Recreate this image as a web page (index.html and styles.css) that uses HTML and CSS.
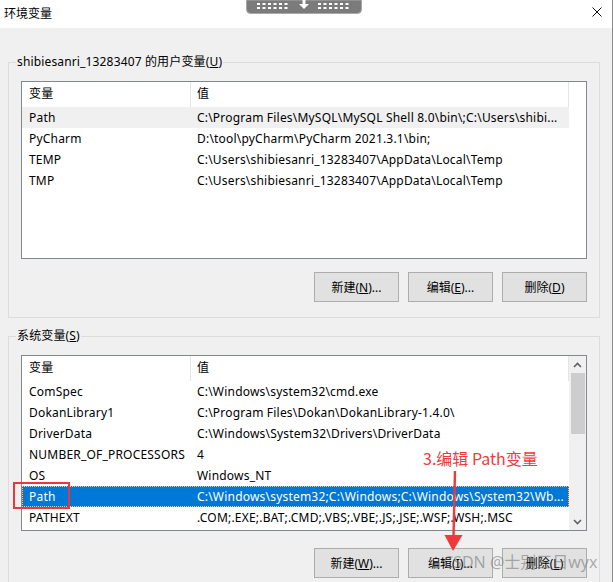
FILE: index.html
```html
<!DOCTYPE html>
<html lang="zh-CN">
<head>
<meta charset="utf-8">
<title>环境变量</title>
<link rel="stylesheet" href="styles.css">
</head>
<body>
<div class="window">
  <div class="titlebar">
    <span class="title">环境变量</span>
    <svg class="close" viewBox="0 0 10 10" width="10" height="10"><path d="M0.5 0.5L9.5 9.5M9.5 0.5L0.5 9.5" stroke="#111" stroke-width="1"/></svg>
  </div>
  <svg class="handle" viewBox="0 0 116 14" width="116" height="14">
    <path d="M0.5 0 V9.5 Q0.5 13.5 4.5 13.5 H111.5 Q115.5 13.5 115.5 9.5 V0 Z" fill="#7b7b7b" stroke="#a9a9a9"/>
    <g fill="#fff">
      <rect x="11" y="3" width="3" height="2"/><rect x="16.5" y="3" width="3" height="2"/><rect x="22" y="3" width="3" height="2"/><rect x="27.5" y="3" width="3" height="2"/><rect x="33" y="3" width="3" height="2"/><rect x="38.5" y="3" width="3" height="2"/>
      <rect x="11" y="7" width="3" height="2"/><rect x="16.5" y="7" width="3" height="2"/><rect x="22" y="7" width="3" height="2"/><rect x="27.5" y="7" width="3" height="2"/><rect x="33" y="7" width="3" height="2"/><rect x="38.5" y="7" width="3" height="2"/>
      <rect x="72" y="3" width="3" height="2"/><rect x="77.5" y="3" width="3" height="2"/><rect x="83" y="3" width="3" height="2"/><rect x="88.5" y="3" width="3" height="2"/><rect x="94" y="3" width="3" height="2"/><rect x="99.5" y="3" width="3" height="2"/>
      <rect x="72" y="7" width="3" height="2"/><rect x="77.5" y="7" width="3" height="2"/><rect x="83" y="7" width="3" height="2"/><rect x="88.5" y="7" width="3" height="2"/><rect x="94" y="7" width="3" height="2"/><rect x="99.5" y="7" width="3" height="2"/>
      <rect x="56.5" y="0" width="3" height="4"/>
      <path d="M53 4 H63 L58 9 Z"/>
    </g>
  </svg>

  <div class="content">
    <fieldset class="group group-user">
      <legend>shibiesanri_13283407 的用户变量(<u>U</u>)</legend>
      <div class="list list-user">
        <div class="list-main">
          <div class="list-head"><div class="cell c1">变量</div><div class="cell c2">值</div></div>
          <div class="row row-hover"><div class="cell c1">Path</div><div class="cell c2">C:\Program Files\MySQL\MySQL Shell 8.0\bin\;C:\Users\shibi...</div></div>
          <div class="row"><div class="cell c1">PyCharm</div><div class="cell c2">D:\tool\pyCharm\PyCharm 2021.3.1\bin;</div></div>
          <div class="row"><div class="cell c1">TEMP</div><div class="cell c2">C:\Users\shibiesanri_13283407\AppData\Local\Temp</div></div>
          <div class="row"><div class="cell c1">TMP</div><div class="cell c2">C:\Users\shibiesanri_13283407\AppData\Local\Temp</div></div>
        </div>
        <div class="vspace"></div>
      </div>
      <div class="buttons">
        <div class="btn">新建(<u>N</u>)...</div>
        <div class="btn">编辑(<u>E</u>)...</div>
        <div class="btn">删除(<u>D</u>)</div>
      </div>
    </fieldset>

    <fieldset class="group group-sys">
      <legend>系统变量(<u>S</u>)</legend>
      <div class="list list-sys">
        <div class="list-main">
          <div class="list-head"><div class="cell c1">变量</div><div class="cell c2">值</div></div>
          <div class="row"><div class="cell c1">ComSpec</div><div class="cell c2">C:\Windows\system32\cmd.exe</div></div>
          <div class="row"><div class="cell c1">DokanLibrary1</div><div class="cell c2">C:\Program Files\Dokan\DokanLibrary-1.4.0\</div></div>
          <div class="row"><div class="cell c1">DriverData</div><div class="cell c2">C:\Windows\System32\Drivers\DriverData</div></div>
          <div class="row"><div class="cell c1">NUMBER_OF_PROCESSORS</div><div class="cell c2">4</div></div>
          <div class="row"><div class="cell c1">OS</div><div class="cell c2">Windows_NT</div></div>
          <div class="row row-selected"><div class="cell c1">Path</div><div class="cell c2">C:\Windows\system32;C:\Windows;C:\Windows\System32\Wb...</div></div>
          <div class="row"><div class="cell c1">PATHEXT</div><div class="cell c2">.COM;.EXE;.BAT;.CMD;.VBS;.VBE;.JS;.JSE;.WSF;.WSH;.MSC</div></div>
        </div>
        <div class="vscroll">
          <div class="sb-btn"><svg viewBox="0 0 9 6" width="9" height="6"><path d="M1 5 L4.5 1.5 L8 5" fill="none" stroke="#606060" stroke-width="1.6"/></svg></div>
          <div class="sb-thumb"></div>
          <div class="sb-track"></div>
          <div class="sb-btn"><svg viewBox="0 0 9 6" width="9" height="6"><path d="M1 1 L4.5 4.5 L8 1" fill="none" stroke="#606060" stroke-width="1.6"/></svg></div>
        </div>
      </div>
      <div class="buttons">
        <div class="btn">新建(<u>W</u>)...</div>
        <div class="btn">编辑(<u>I</u>)...</div>
        <div class="btn">删除(<u>L</u>)</div>
      </div>
    </fieldset>
  </div>

  <div class="mark-box"></div>
  <div class="mark-text">3.编辑 Path变量</div>
  <svg class="mark-arrow" viewBox="0 0 24 84" width="24" height="84">
    <path d="M12 0 L10.5 66" stroke="#f0393b" stroke-width="2.4" fill="none"/>
    <path d="M1.5 64 L19.5 64 L10 80 Z" fill="#f0393b"/>
  </svg>
  <div class="watermark">CSDN @士别三日wyx</div>
</div>
</body>
</html>
```

FILE: styles.css
```css
* { box-sizing: border-box; }

html, body {
  margin: 0;
  padding: 0;
}

body {
  width: 613px;
  height: 582px;
  overflow: hidden;
  background: #f0f0f0;
  font-family: "Noto Sans", "Noto Sans CJK SC", sans-serif;
  font-size: 12px;
  color: #000;
}

.window {
  position: relative;
  width: 613px;
  height: 582px;
  background: #f0f0f0;
  border-right: 1px solid #8a8a8a;
}

.titlebar {
  height: 28px;
  background: #fff;
  display: flex;
  align-items: center;
  justify-content: space-between;
  padding: 0 10px 0 4px;
}

.title {
  line-height: 16px;
}

.close {
  display: block;
  margin-bottom: 4px;
}

.handle {
  position: absolute;
  left: 246px;
  top: 0;
  display: block;
}

.content {
  padding: 26px 12px 0 8px;
}

.group {
  margin: 0;
  border: 1px solid #dcdcdc;
  padding: 11px 12px 15px 12px;
  min-width: 0;
}

.group legend {
  padding: 0 1px;
  margin-left: -5px;
  line-height: 16px;
  font-size: 12px;
  letter-spacing: 0.15px;
}

.group-sys {
  margin-top: 10px;
}

.list {
  display: flex;
  background: #fff;
  border: 1px solid #828790;
  letter-spacing: 0.2px;
}

.list-user { height: 178px; }
.list-sys { height: 176px; }

.list-main {
  flex: 1;
  min-width: 0;
}

.vspace, .vscroll {
  width: 17px;
  flex: none;
}

.list-head {
  display: grid;
  grid-template-columns: 169px 1fr;
  height: 25px;
  line-height: 24px;
  border-right: 1px solid #e5e5e5;
}

.list-head .c1 {
  border-right: 1px solid #e5e5e5;
}

.row {
  display: grid;
  grid-template-columns: 169px 1fr;
  height: 21px;
  line-height: 21px;
}

.cell {
  white-space: nowrap;
  overflow: hidden;
}

.c1 { padding-left: 7px; }
.c2 { padding-left: 6px; }

.row-hover {
  background: #f0f0f0;
}

.row-selected {
  background: #0078d7;
  color: #fff;
  outline: 1px dotted #f7c88a;
  outline-offset: -1px;
}

.vscroll {
  display: flex;
  flex-direction: column;
  background: #f0f0f0;
}

.sb-btn {
  height: 17px;
  display: flex;
  align-items: center;
  justify-content: center;
}

.sb-thumb {
  height: 61px;
  margin: 0 1px 0 2px;
  background: #cdcdcd;
}

.sb-track { flex: 1; }

.buttons {
  display: flex;
  justify-content: flex-end;
  gap: 9px;
}

.group-user .buttons { margin-top: 13px; }
.group-sys .buttons { margin-top: 17px; }

.btn {
  width: 85px;
  height: 30px;
  border: 1px solid #adadad;
  background: #e1e1e1;
  display: flex;
  align-items: center;
  justify-content: center;
}

.mark-box {
  position: absolute;
  left: 13px;
  top: 482px;
  width: 57px;
  height: 27px;
  border: 2px solid #e8383b;
}

.mark-text {
  position: absolute;
  left: 423px;
  top: 448px;
  font-family: "Noto Sans CJK SC", sans-serif;
  font-size: 16px;
  line-height: 20px;
  color: #f03a3c;
}

.mark-arrow {
  position: absolute;
  left: 443px;
  top: 471px;
  display: block;
}

.watermark {
  position: absolute;
  left: 443px;
  top: 551px;
  font-family: "Noto Sans", "Noto Sans CJK SC", sans-serif;
  font-size: 16px;
  line-height: 22px;
  color: rgba(110, 110, 110, 0.55);
  white-space: nowrap;
}
```
